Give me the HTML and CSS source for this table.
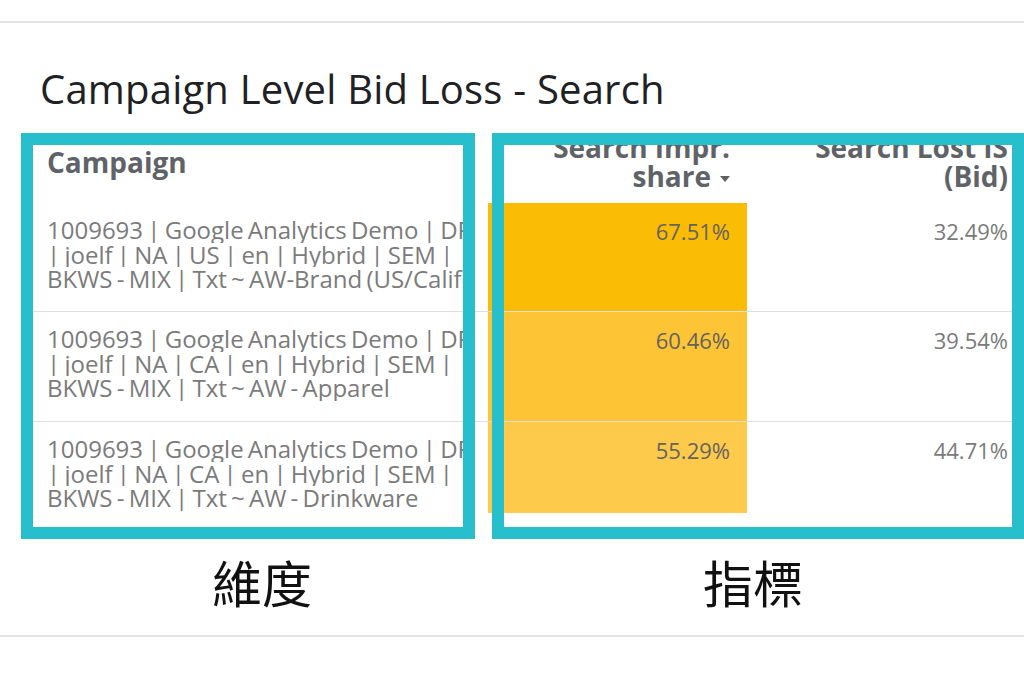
FILE: index.html
```html
<!DOCTYPE html>
<html lang="zh-Hant">
<head>
<meta charset="utf-8">
<title>Campaign Level Bid Loss - Search</title>
<link rel="stylesheet" href="styles.css">
</head>
<body>
<div class="rule rule-top"></div>
<h1 class="title">Campaign Level Bid Loss - Search</h1>
<div class="panel">
  <div class="table">
    <div class="cell head head-dim">Campaign</div>
    <div class="cell head head-metric">Search Impr.<br>share<svg class="sort" width="10" height="6" viewBox="0 0 10 6"><path d="M0 0H10L5 6Z" fill="#616161"/></svg></div>
    <div class="cell head head-metric head-last">Search Lost IS<br>(Bid)</div>

    <div class="cell dim row1"><span class="ln">1009693 | Google Analytics Demo | DR</span><span class="ln">| joelf | NA | US | en | Hybrid | SEM |</span><span class="ln">BKWS - MIX | Txt ~ AW-Brand (US/California)</span></div>
    <div class="cell metric heat heat1 row1">67.51%</div>
    <div class="cell metric last row1">32.49%</div>

    <div class="cell dim row2"><span class="ln">1009693 | Google Analytics Demo | DR</span><span class="ln">| joelf | NA | CA | en | Hybrid | SEM |</span><span class="ln">BKWS - MIX | Txt ~ AW - Apparel</span></div>
    <div class="cell metric heat heat2 row2">60.46%</div>
    <div class="cell metric last row2">39.54%</div>

    <div class="cell dim row3"><span class="ln">1009693 | Google Analytics Demo | DR</span><span class="ln">| joelf | NA | CA | en | Hybrid | SEM |</span><span class="ln">BKWS - MIX | Txt ~ AW - Drinkware</span></div>
    <div class="cell metric heat heat3 row3">55.29%</div>
    <div class="cell metric last row3">44.71%</div>
  </div>
  <div class="mark mark-dim"></div>
  <div class="mark mark-metric"></div>
</div>
<div class="labels">
  <div class="label label-dim">維度</div>
  <div class="label label-metric">指標</div>
</div>
<div class="rule rule-bottom"></div>
</body>
</html>
```
FILE: styles.css
```css
* { box-sizing: border-box; }
html, body { margin: 0; padding: 0; background: #ffffff; }
body {
  width: 1024px;
  height: 681px;
  overflow: hidden;
  font-family: "Open Sans", Roboto, "Liberation Sans", sans-serif;
}
.rule { height: 2px; background: #e4e4e4; }
.rule-top { margin-top: 21px; }
.rule-bottom { margin-top: 29px; }

.title {
  margin: 44px 0 0 40px;
  font-size: 40px;
  line-height: 44px;
  font-weight: 400;
  color: #202124;
  letter-spacing: 0.2px;
}

.panel {
  position: relative;
  margin-top: 20px;
}
.table {
  margin-left: 28px;
  width: 988px;
  display: grid;
  grid-template-columns: 460px 259px 269px;
  grid-template-rows: 72px 109px 110px 91px;
}
.cell { overflow: hidden; }
.head {
  font-size: 28px;
  line-height: 29px;
  font-weight: 700;
  color: #5f6368;
}
.head-dim { padding: 17px 0 0 19px; }
.head-metric { text-align: right; padding: 2px 17px 0 0; }
.head-last { padding-right: 8px; }
.sort { margin-left: 9px; vertical-align: 5px; }

.dim {
  padding: 15px 14px 0 19px;
  font-size: 24px;
  line-height: 24.5px;
  word-spacing: -2px;
  color: #7b7b7b;
}
.ln { display: block; white-space: nowrap; overflow: hidden; }
.metric {
  padding: 16px 17px 0 0;
  text-align: right;
  font-size: 22px;
  line-height: 24.5px;
  color: #7b7b7b;
}
.metric.last { padding-right: 8px; }
.heat { color: #666260; }
.heat1 { background: #fbbc05; }
.heat2 { background: #fdc535; }
.heat3 { background: #fdca4b; }
.row1, .row2 { border-bottom: 1px solid #dedede; }

.mark {
  position: absolute;
  top: 2px;
  height: 406px;
  border: 12px solid #26bfcb;
}
.mark-dim { left: 21px; width: 454px; }
.mark-metric { left: 492px; width: 532px; }

.labels {
  display: flex;
  margin-top: 43px;
  height: 50px;
}
.label {
  font-family: "Noto Sans CJK TC", "Noto Sans CJK SC", sans-serif;
  font-size: 50px;
  line-height: 50px;
  color: #111111;
}
.label-dim { margin-left: 212px; }
.label-metric { margin-left: 391px; }
```
